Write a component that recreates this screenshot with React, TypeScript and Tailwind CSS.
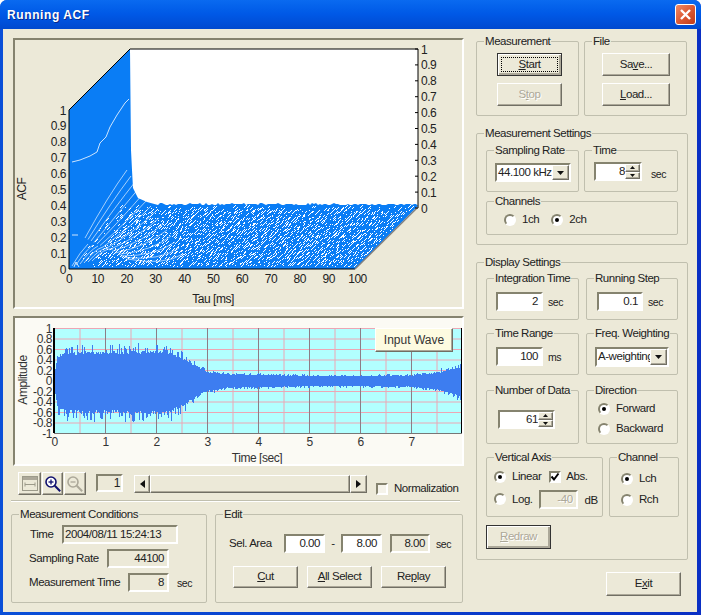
import type { ReactNode } from "react";

const rng = (seed: number) => () => {
  seed = (seed + 0x6d2b79f5) | 0;
  let t = Math.imul(seed ^ (seed >>> 15), 1 | seed);
  t = (t + Math.imul(t ^ (t >>> 7), 61 | t)) ^ t;
  return ((t ^ (t >>> 14)) >>> 0) / 4294967296;
};

const sunken = "border-2 border-t-[#85836f] border-l-[#85836f] border-r-white border-b-white";
const raised = "border border-t-white border-l-white border-b-[#716f64] border-r-[#716f64] shadow-[inset_-1px_-1px_0_#aca899]";
const dim = "text-[#aca899] [text-shadow:1px_1px_0_#fff]";
const blackRim = "outline outline-1 -outline-offset-1 outline-[#333] shadow-[inset_1px_1px_0_#fff,inset_-2px_-2px_0_#aca899]";

function Group({ title, className, children }: { title: string; className?: string; children?: ReactNode }) {
  return (
    <div className={`relative shrink-0 rounded-[2px] border border-[#c0bfae] ${className ?? ""}`}>
      <span className="absolute -top-[8px] left-[7px] bg-[#ece9d8] px-[1px] leading-[14px] whitespace-nowrap">{title}</span>
      {children}
    </div>
  );
}

function Btn({ className, state, children }: { className?: string; state?: "focus" | "def" | "off"; children: ReactNode }) {
  return (
    <div className={`relative flex shrink-0 items-center justify-center ${raised} ${state === "off" ? dim : ""} ${state === "focus" ? blackRim : ""} ${className ?? ""}`}>
      {state === "focus" && <span className="absolute inset-[3px] border border-dotted border-black" />}
      {children}
    </div>
  );
}

function Field({ className, off, children }: { className?: string; off?: boolean; children?: ReactNode }) {
  return (
    <div className={`flex shrink-0 items-center justify-end pr-[3px] ${sunken} ${off ? "bg-[#ece9d8]" : "bg-white"} ${className ?? ""}`}>
      {children}
    </div>
  );
}

function Radio({ on, label, className }: { on?: boolean; label: string; className?: string }) {
  return (
    <div className={`flex items-center gap-[6px] ${className ?? ""}`}>
      <span className={`flex h-[12px] w-[12px] items-center justify-center rounded-full bg-white ${sunken}`}>
        {on && <span className="h-[4px] w-[4px] rounded-full bg-black" />}
      </span>
      {label}
    </div>
  );
}

function Tri({ dir }: { dir: "up" | "down" | "left" | "right" }) {
  const pts = { up: "0,4 3.5,0 7,4", down: "0,0 7,0 3.5,4", left: "5,0 5,8 0,4", right: "0,0 0,8 5,4" }[dir];
  return (
    <svg width={dir === "up" || dir === "down" ? 7 : 5} height={dir === "up" || dir === "down" ? 4 : 8}>
      <polygon points={pts} fill="#111" />
    </svg>
  );
}

function Spin({ className, value }: { className?: string; value: string }) {
  return (
    <div className={`flex items-stretch ${sunken} bg-white ${className ?? ""}`}>
      <span className="flex flex-1 items-center justify-end">{value}</span>
      <div className="flex w-[15px] flex-col">
        <span className={`flex h-1/2 items-center justify-center bg-[#ece9d8] ${raised}`}>
          <svg width="5" height="3"><polygon points="0,3 2.5,0 5,3" fill="#111" /></svg>
        </span>
        <span className={`flex h-1/2 items-center justify-center bg-[#ece9d8] ${raised}`}>
          <svg width="5" height="3"><polygon points="0,0 5,0 2.5,3" fill="#111" /></svg>
        </span>
      </div>
    </div>
  );
}

function Combo({ className, value }: { className?: string; value: string }) {
  return (
    <div className={`flex items-stretch overflow-hidden ${sunken} bg-white ${className ?? ""}`}>
      <span className="flex-1 overflow-hidden pl-[1px] leading-[15px] whitespace-nowrap">{value}</span>
      <span className={`flex w-[17px] shrink-0 items-center justify-center bg-[#ece9d8] ${raised}`}>
        <Tri dir="down" />
      </span>
    </div>
  );
}

function acfShapes() {
  const r = rng(7);
  let top = "69,110 130,49 131,150 132,170 133,188 135,192 138,198 147,202 158,205 ";
  for (let x = 160; x <= 417; x += 2) {
    const bump = r() < 0.14 ? 3 : r() * 2;
    top += `${x},${(205.5 - bump).toFixed(0)} `;
  }
  top += "418,206 355,269 69,269";
  let specks = "";
  for (let cy = 208; cy < 267; cy += 3) {
    for (let cx = 70; cx < 418; cx += 3) {
      const x = cx + Math.floor(r() * 3);
      const y = cy + Math.floor(r() * 3);
      if (x > 352 + (269 - y) || y > 267) continue;
      const depth = y - (268 - (x - 72) * 1.4);
      if (depth < 0) continue;
      const p = depth < 24 ? 0.3 : y < 211 ? 0.55 : 0.97;
      if (r() < p) {
        const len = 1 + Math.floor(r() * 3);
        specks += `M${x} ${y}l${len} ${-len}`;
      }
    }
  }
  let fans = "";
  for (let k = 0; k < 15; k++) {
    fans += `M${85 + k * 3} ${238 + k * 1.5}Q${108 + k * 4} ${196 + k * 5} ${127 + k * 4} ${170 + k * 6}`;
  }
  for (let k = 0; k < 6; k++) {
    fans += `M${72 + k * 4} ${266 - k}Q${80 + k * 5} ${252 - k} ${88 + k * 5} ${244 + k}`;
  }
  return { top, specks, fans };
}

const acf = acfShapes();

function AcfPlot() {
  const ys = [1, 0.9, 0.8, 0.7, 0.6, 0.5, 0.4, 0.3, 0.2, 0.1, 0];
  return (
    <svg width="447" height="267" viewBox="15 40 447 267" fontSize="12" fill="#222">
      <polygon points="130,49 418,49 418,207 355,269 69,269 69,110" fill="#fff" />
      <polygon points={acf.top} fill="#0a7df5" />
      <path d={acf.specks} stroke="#fff" strokeWidth="1" fill="none" shapeRendering="crispEdges" />
      <path d={acf.fans} stroke="#fff" strokeWidth="0.8" fill="none" opacity="0.8" />
      <path d="M72 162L80 160L90 156L97 152L100 143L106 137L110 127L117 115L125 103L129 99M72 235L78 235M74 267L76 262L79 267" stroke="#fff" strokeWidth="0.8" fill="none" />
      <path d="M69 110L130 49H418V208M69 110V269H355" stroke="#000" strokeWidth="1" fill="none" />
      <path d="M355 269L418 207" stroke="#808080" strokeWidth="1.5" />
      {ys.map((v, i) => (
        <g key={v}>
          <text x="66" y={110 + i * 15.9 + 4.5} textAnchor="end">{v}</text>
          <line x1="415" x2="418" y1={49 + i * 15.9} y2={49 + i * 15.9} stroke="#000" />
          <text x="421" y={49 + i * 15.9 + 4.5}>{v}</text>
        </g>
      ))}
      {[0, 10, 20, 30, 40, 50, 60, 70, 80, 90, 100].map((v, i) => (
        <text key={v} x={69 + i * 28.85} y="283" textAnchor="middle">{v}</text>
      ))}
      <text x="213" y="303" textAnchor="middle">Tau [ms]</text>
      <text transform="translate(26 189) rotate(-90)" textAnchor="middle">ACF</text>
    </svg>
  );
}

const ENV: [number, number][] = [[0, 0.1], [0.06, 0.48], [0.3, 0.54], [1.2, 0.55], [2.2, 0.57], [2.45, 0.46], [2.8, 0.28], [3, 0.17], [3.4, 0.12], [4, 0.11], [5, 0.09], [6, 0.09], [7, 0.1], [7.5, 0.15], [8, 0.27]];

function envAt(t: number) {
  for (let i = 1; i < ENV.length; i++) {
    if (t <= ENV[i][0]) {
      const [a, b] = [ENV[i - 1], ENV[i]];
      return a[1] + ((b[1] - a[1]) * (t - a[0])) / (b[0] - a[0]);
    }
  }
  return 0.27;
}

function wavePath() {
  const r = rng(21);
  let d = "";
  for (let x = 54; x < 462; x++) {
    const e = envAt((x - 54) / 51);
    const up = e * (0.9 + r() * 0.14) * (r() < 0.3 ? 1.1 + r() * 0.22 : 1);
    const dn = e * (1 + r() * 0.14) * (r() < 0.3 ? 1.08 + r() * 0.22 : 1) + 0.01;
    d += `M${x + 0.5} ${(380.5 - up * 52.5).toFixed(1)}V${(380.5 + dn * 52.5).toFixed(1)}`;
  }
  return d;
}

const wave = wavePath();

function WavePlot() {
  const ys = ["1", "0.8", "0.6", "0.4", "0.2", "0", "-0.2", "-0.4", "-0.6", "-0.8", "-1"];
  const half = [0.5, 1.5, 2.5, 3.5, 4.5, 5.5, 6.5, 7.5];
  return (
    <svg width="447" height="146" viewBox="15 318 447 146" fontSize="12" fill="#333">
      <rect x="54" y="328" width="408" height="105" fill="#b2ffff" />
      {ys.map((_, i) => (
        <line key={i} x1="54" x2="462" y1={328.5 + i * 10.5} y2={328.5 + i * 10.5} stroke="#eda6b4" />
      ))}
      {half.map((t) => (
        <line key={t} x1={54.5 + t * 51} x2={54.5 + t * 51} y1="328" y2="433" stroke="#eda6b4" />
      ))}
      {[1, 2, 3, 4, 5, 6, 7].map((t) => (
        <line key={t} x1={54.5 + t * 51} x2={54.5 + t * 51} y1="328" y2="433" stroke="#8d7d86" />
      ))}
      <path d={wave} stroke="#3d7df0" strokeWidth="1" shapeRendering="crispEdges" />
      <rect x="53" y="328" width="2" height="105" fill="#000" />
      <rect x="461" y="328" width="1" height="105" fill="#000" />
      <rect x="54" y="433" width="408" height="1" fill="#777" />
      {ys.map((v, i) => (
        <text key={v} x="52" y={328 + i * 10.5 + 4.5} textAnchor="end">{v}</text>
      ))}
      {[0, 1, 2, 3, 4, 5, 6, 7].map((t) => (
        <text key={t} x={54.5 + t * 51} y="446" textAnchor="middle">{t}</text>
      ))}
      <text x="257" y="462" textAnchor="middle">Time [sec]</text>
      <text transform="translate(27 380) rotate(-90)" textAnchor="middle">Amplitude</text>
    </svg>
  );
}

function Magnifier({ minus }: { minus?: boolean }) {
  const c = minus ? "#aca899" : "#10106e";
  return (
    <svg width="18" height="18" viewBox="0 0 18 18" fill="none">
      <circle cx="7" cy="7" r="5" stroke={c} strokeWidth="1.6" fill={minus ? "none" : "#fff"} />
      <path d="M4.5 7h5" stroke={c} strokeWidth="1.3" />
      {!minus && <path d="M7 4.5v5" stroke={c} strokeWidth="1.3" />}
      <path d="M10.8 10.8l5.4 5.4" stroke={c} strokeWidth="2" />
    </svg>
  );
}

function Toolbar() {
  return (
    <div className="ml-[7px] mt-[6px] flex h-[23px] items-start">
      <div className={`flex h-[23px] w-[23px] items-center justify-center ${raised}`}>
        <svg width="16" height="15" viewBox="0 0 16 15" fill="none">
          <rect x="0.5" y="0.5" width="15" height="14" stroke="#9c9a8a" />
          <rect x="1" y="1" width="14" height="3" fill="#aca899" />
          <path d="M3 8.5h10M3 6.5v4M13 6.5v4" stroke="#9c9a8a" />
        </svg>
      </div>
      <div className={`ml-[1px] flex h-[23px] w-[21px] items-center justify-center ${raised}`}><Magnifier /></div>
      <div className={`ml-[1px] flex h-[23px] w-[22px] items-center justify-center ${raised}`}><Magnifier minus /></div>
      <Field off className="ml-[10px] mt-[2px] h-[18px] w-[27px] !pr-[1px] text-[12px]">1</Field>
      <div className="ml-[11px] mt-[3px] flex h-[18px] w-[233px]">
        <span className={`flex w-[16px] items-center justify-center ${raised}`}><Tri dir="left" /></span>
        <span className={`flex-1 ${raised}`} />
        <span className={`flex w-[17px] items-center justify-center ${raised}`}><Tri dir="right" /></span>
      </div>
      <div className="ml-[9px] mt-[8px] flex items-center gap-[6px]">
        <span className={`h-[12px] w-[12px] bg-[#f5f3ea] ${sunken}`} />
        Normalization
      </div>
    </div>
  );
}

function Conditions() {
  return (
    <Group title="Measurement Conditions" className="h-[89px] w-[196px] text-[#222]">
      <div className="mt-[10px] flex h-[19px] items-center pl-[18px]">
        <span className="w-[32px]">Time</span>
        <Field off className="h-[19px] w-[116px] !justify-start pl-[1px]">2004/08/11 15:24:13</Field>
      </div>
      <div className="mt-[5px] flex h-[19px] items-center pl-[17px]">
        <span className="w-[78px]">Sampling Rate</span>
        <Field off className="h-[19px] w-[62px]">44100</Field>
      </div>
      <div className="mt-[5px] flex h-[19px] items-center pl-[17px]">
        <span className="w-[99px]">Measurement Time</span>
        <Field off className="h-[19px] w-[41px]">8</Field>
        <span className="ml-[8px] mt-[3px] text-[10.5px]">sec</span>
      </div>
    </Group>
  );
}

function EditGroup() {
  return (
    <Group title="Edit" className="h-[89px] w-[248px]">
      <div className="mt-[19px] flex h-[19px] items-center pl-[13px]">
        <span className="w-[55px]">Sel. Area</span>
        <Field className="h-[19px] w-[41px]">0.00</Field>
        <span className="w-[16px] text-center">-</span>
        <Field className="h-[19px] w-[41px]">8.00</Field>
        <Field off className="ml-[8px] h-[19px] w-[40px]">8.00</Field>
        <span className="ml-[6px] mt-[2px] text-[10.5px]">sec</span>
      </div>
      <div className="ml-[17px] mt-[13px] flex gap-[9px]">
        <Btn className="h-[22px] w-[65px]"><span><u>C</u>ut</span></Btn>
        <Btn className="h-[22px] w-[65px]"><span><u>A</u>ll Select</span></Btn>
        <Btn className="h-[22px] w-[65px]"><span>Re<u>p</u>lay</span></Btn>
      </div>
    </Group>
  );
}

function MeasurementSettings() {
  return (
    <Group title="Measurement Settings" className="mt-[17px] h-[112px] w-[212px] pl-[9px] pt-[16px]">
      <div className="flex gap-[5px]">
        <Group title="Sampling Rate" className="h-[42px] w-[93px] pl-[8px] pt-[12px]">
          <Combo className="h-[19px] w-[76px]" value="44.100 kHz" />
        </Group>
        <Group title="Time" className="flex h-[42px] w-[94px] items-start pl-[9px] pt-[11px]">
          <Spin className="h-[19px] w-[48px]" value="8" />
          <span className="ml-[9px] mt-[5px] text-[10.5px]">sec</span>
        </Group>
      </div>
      <Group title="Channels" className="mt-[9px] flex h-[34px] w-[192px] items-center pl-[17px] pt-[3px]">
        <Radio label="1ch" />
        <Radio on label="2ch" className="ml-[12px]" />
      </Group>
    </Group>
  );
}

function Unit({ value, unit, pl, w }: { value: string; unit: string; pl: string; w: string }) {
  return (
    <div className={`flex items-center pt-[13px] ${pl}`}>
      <Field className={`h-[19px] ${w}`}>{value}</Field>
      <span className="ml-[5px] mt-[2px] text-[10.5px]">{unit}</span>
    </div>
  );
}

function DisplaySettings() {
  return (
    <Group title="Display Settings" className="mt-[17px] h-[298px] w-[212px] pl-[9px] pt-[15px]">
      <div className="flex gap-[7px]">
        <Group title="Integration Time" className="h-[42px] w-[93px]">
          <Unit value="2" unit="sec" pl="pl-[9px]" w="w-[47px]" />
        </Group>
        <Group title="Running Step" className="h-[42px] w-[92px]">
          <Unit value="0.1" unit="sec" pl="pl-[10px]" w="w-[46px]" />
        </Group>
      </div>
      <div className="mt-[13px] flex gap-[7px]">
        <Group title="Time Range" className="h-[42px] w-[93px]">
          <Unit value="100" unit="ms" pl="pl-[9px]" w="w-[47px]" />
        </Group>
        <Group title="Freq. Weighting" className="h-[42px] w-[92px] pl-[8px] pt-[13px]">
          <Combo className="h-[20px] w-[74px]" value="A-weighting" />
        </Group>
      </div>
      <div className="mt-[15px] flex gap-[7px]">
        <Group title="Number of Data" className="h-[54px] w-[93px] pl-[11px] pt-[19px]">
          <Spin className="h-[19px] w-[57px]" value="61" />
        </Group>
        <Group title="Direction" className="h-[54px] w-[92px] pl-[11px] pt-[9px]">
          <Radio on label="Forward" />
          <Radio label="Backward" className="mt-[3px]" />
        </Group>
      </div>
      <div className="mt-[13px] flex gap-[6px]">
        <Group title="Vertical Axis" className="h-[60px] w-[117px] pl-[7px] pt-[10px]">
          <div className="flex items-center">
            <Radio on label="Linear" />
            <span className={`ml-[8px] flex h-[12px] w-[12px] items-center justify-center bg-white ${sunken}`}>
              <svg width="10" height="10" viewBox="0 0 10 10" className="shrink-0"><path d="M1.5 4.5L4 7.5L8.5 1.5" stroke="#000" strokeWidth="2" fill="none" /></svg>
            </span>
            <span className="ml-[5px]">Abs.</span>
          </div>
          <div className="mt-[4px] flex items-center">
            <Radio label="Log." />
            <Field off className="ml-[6px] h-[19px] w-[39px]"><span className={dim}>-40</span></Field>
            <span className="ml-[7px] mt-[3px]">dB</span>
          </div>
        </Group>
        <Group title="Channel" className="h-[60px] w-[70px] pl-[11px] pt-[12px]">
          <Radio on label="Lch" />
          <Radio label="Rch" className="mt-[4px]" />
        </Group>
      </div>
      <Btn state="off" className={`mt-[8px] h-[24px] w-[65px] ${blackRim}`}><span><u>R</u>edraw</span></Btn>
    </Group>
  );
}

export default function App() {
  return (
    <div className="flex h-[615px] w-[701px] flex-col overflow-hidden rounded-t-[7px] bg-gradient-to-r from-[#0a4fd8] to-[#0a2fc4] font-['Liberation_Sans',sans-serif] text-[11.5px] tracking-[-0.45px] text-[#222]">
      <div className="flex h-[29px] shrink-0 items-center bg-gradient-to-b from-[#0a6af0] via-[#0058e6] to-[#0049cf] pl-[7px] pr-[5px]">
        <span className="flex-1 text-[12px] font-bold tracking-[0.6px] text-white [text-shadow:1px_1px_0_#0a2a8a]">Running ACF</span>
        <div className="flex h-[21px] w-[21px] items-center justify-center rounded-[3px] border border-white bg-gradient-to-br from-[#ee8a66] via-[#dd5a34] to-[#c23a16]">
          <svg width="13" height="13" viewBox="0 0 13 13"><path d="M2 2L11 11M11 2L2 11" stroke="#fff" strokeWidth="2.4" /></svg>
        </div>
      </div>
      <div className="ml-[3px] mr-[4px] flex h-[583px] bg-[#ece9d8] pl-[8px]">
        <div className="w-[454px] shrink-0 pt-[9px]">
          <div className={`ml-[2px] h-[271px] w-[451px] ${sunken}`}>
            <AcfPlot />
          </div>
          <div className={`relative ml-[2px] mt-[7px] h-[150px] w-[451px] bg-[#fbfaf4] ${sunken}`}>
            <WavePlot />
            <div className={`absolute left-[360px] top-[10px] flex h-[24px] w-[78px] items-center justify-center bg-[#fdfbe0] text-[12px] tracking-normal text-[#333] ${raised}`}>
              Input Wave
            </div>
          </div>
          <Toolbar />
          <div className="mt-[5px] h-[2px] w-[449px] border-t border-[#c0bfae] bg-white" />
          <div className="mt-[12px] flex gap-[8px]">
            <Conditions />
            <EditGroup />
          </div>
        </div>
        <div className="ml-[11px] w-[212px] pt-[12px]">
          <div className="flex gap-[5px]">
            <Group title="Measurement" className="h-[75px] w-[103px] pl-[20px] pt-[11px]">
              <Btn state="focus" className="h-[23px] w-[65px]"><span><u>S</u>tart</span></Btn>
              <Btn state="off" className="mt-[7px] h-[23px] w-[65px]"><span>S<u>t</u>op</span></Btn>
            </Group>
            <Group title="File" className="h-[75px] w-[103px] pl-[17px] pt-[11px]">
              <Btn className="h-[23px] w-[68px]"><span>Sa<u>v</u>e...</span></Btn>
              <Btn className="mt-[7px] h-[23px] w-[68px]"><span><u>L</u>oad...</span></Btn>
            </Group>
          </div>
          <MeasurementSettings />
          <DisplaySettings />
          <Btn className="ml-[130px] mt-[12px] h-[24px] w-[75px]"><span>E<u>x</u>it</span></Btn>
        </div>
      </div>
    </div>
  );
}
